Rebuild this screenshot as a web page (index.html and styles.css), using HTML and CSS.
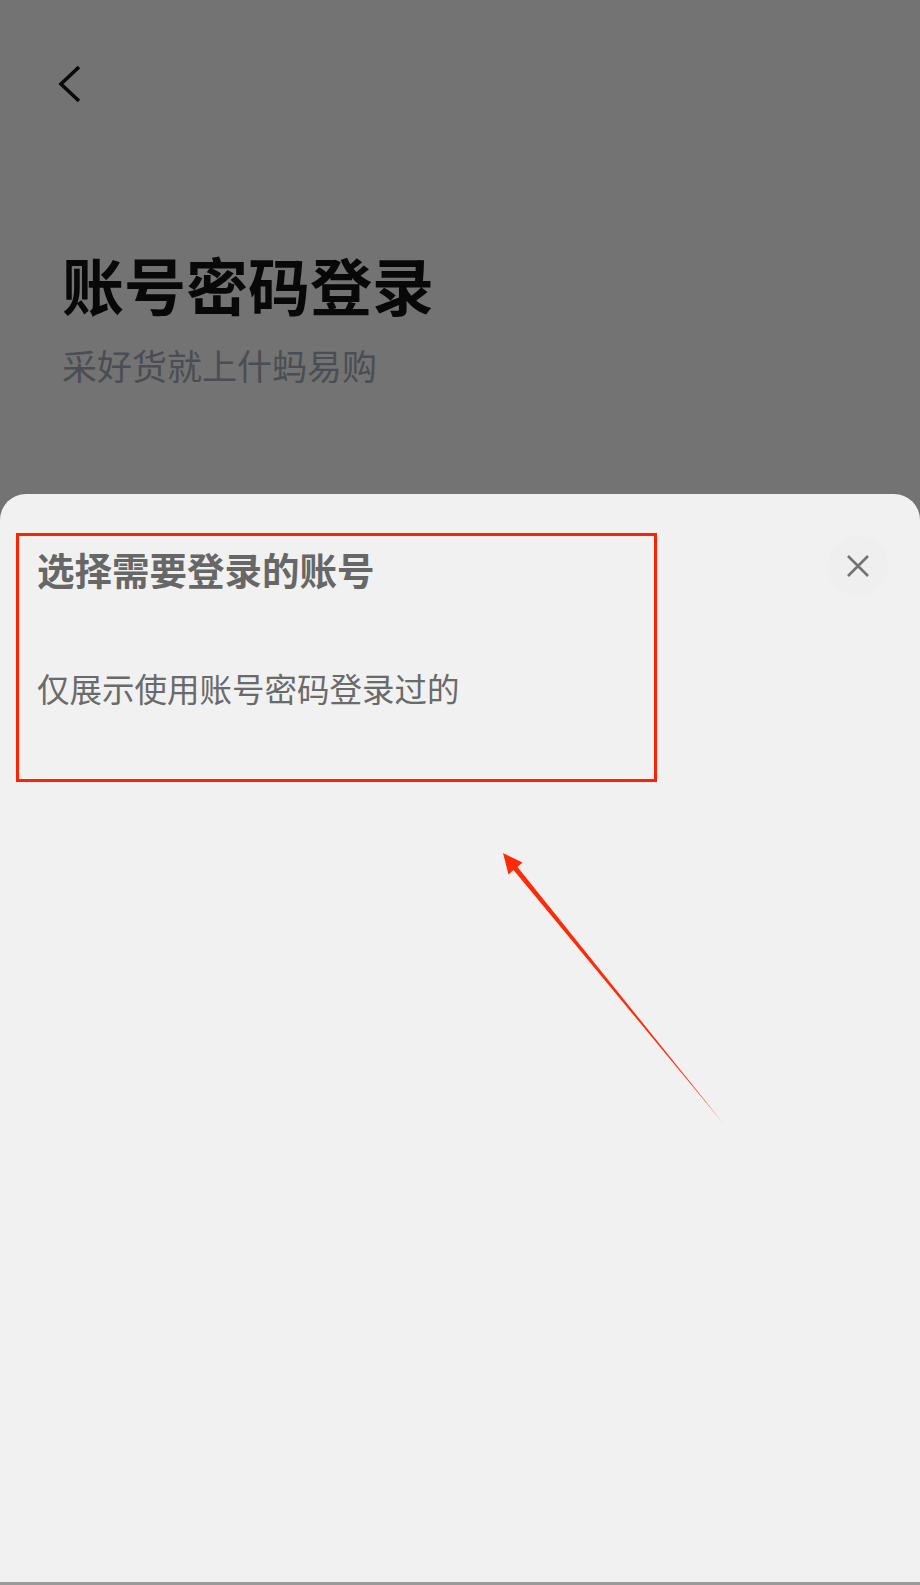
FILE: index.html
```html
<!DOCTYPE html>
<html lang="zh-CN">
<head>
    <meta charset="UTF-8">
    <meta name="viewport" content="width=device-width, initial-scale=1.0">
    <title>账号密码登录</title>
    <link rel="stylesheet" href="styles.css">
</head>
<body>
    <div class="page">
        <div class="top">
            <div class="back">
                <svg width="28" height="40" viewBox="0 0 28 40">
                    <polyline points="23,3 5,20 23,37" fill="none" stroke="#0a0a0a" stroke-width="3.6"/>
                </svg>
            </div>
            <h1 class="title">账号密码登录</h1>
            <p class="slogan">采好货就上什蚂易购</p>
        </div>

        <div class="sheet">
            <div class="sheet-head">
                <div class="mark">
                    <h2 class="sheet-title">选择需要登录的账号</h2>
                    <p class="sheet-tip">仅展示使用账号密码登录过的</p>
                </div>
                <div class="close">
                    <svg width="24" height="24" viewBox="0 0 24 24">
                        <path d="M2 2 L22 22 M22 2 L2 22" stroke="#737373" stroke-width="2.6" fill="none"/>
                    </svg>
                </div>
            </div>
        </div>

        <!-- annotation arrow -->
        <svg class="arrow" width="260" height="300" viewBox="490 840 260 300">
            <polygon points="503,853 522.5,862.5 517.5,867 723,1123 513.5,870 508.5,874.5" fill="#ff2a06"/>
        </svg>
    </div>
</body>
</html>
```

FILE: styles.css
```css
* {
    margin: 0;
    padding: 0;
    box-sizing: border-box;
}
body {
    font-family: "Noto Sans CJK SC", "Noto Sans", sans-serif;
    background: #737373;
}
.page {
    position: relative;
    width: 920px;
    height: 1585px;
    display: flex;
    flex-direction: column;
    overflow: hidden;
}
.top {
    height: 494px;
    background: #737373;
    padding: 64px 0 0 56px;
}
.back {
    width: 30px;
    height: 40px;
}
.title {
    margin: 140px 0 0 6px;
    font-size: 62px;
    line-height: 80px;
    font-weight: bold;
    color: #080808;
}
.slogan {
    margin: 19px 0 0 6px;
    font-size: 35px;
    line-height: 44px;
    color: #4b4d55;
}
.sheet {
    flex: 1;
    background: #f1f1f1;
    border-radius: 26px 26px 0 0;
    border-bottom: 3px solid #9a9a9a;
    padding: 39px 0 0 16px;
}
.sheet-head {
    display: flex;
    justify-content: space-between;
    align-items: flex-start;
}
.mark {
    width: 641px;
    height: 249px;
    border: 3px solid #ff2200;
    padding: 8px 0 0 18px;
}
.sheet-title {
    font-size: 37.5px;
    line-height: 50px;
    font-weight: bold;
    color: #676767;
}
.sheet-tip {
    margin-top: 72px;
    font-size: 32.5px;
    line-height: 44px;
    color: #6a6a6a;
}
.close {
    width: 60px;
    height: 60px;
    margin: 3px 32px 0 0;
    border-radius: 50%;
    background: #efefef;
    display: flex;
    align-items: center;
    justify-content: center;
}
.arrow {
    position: absolute;
    left: 490px;
    top: 840px;
}
```
